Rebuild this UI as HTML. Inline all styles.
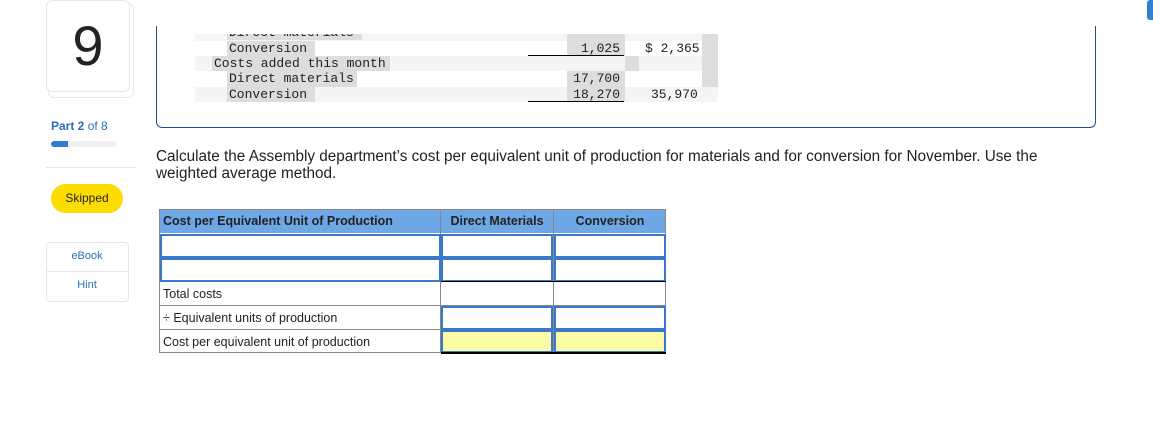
<!DOCTYPE html>
<html><head><style>
body{margin:0;width:1153px;height:428px;background:#fff;position:relative;overflow:hidden;font-family:"Liberation Sans",sans-serif}
.a{position:absolute}
.mono{font-family:"Liberation Mono",monospace;font-size:13px;line-height:15px;color:#222}
.hl{background:#ddd}
</style></head><body>
<div class="a" style="left:48px;top:3px;width:84px;height:93px;border:1px solid #e6e6e6;border-radius:6px"></div>
<div class="a" style="left:46px;top:0px;width:82px;height:90px;border:1px solid #e6e6e6;border-radius:6px;background:#fff;text-align:center;font-size:56px;line-height:90px;color:#222">9</div>
<div class="a" style="left:51px;top:119px;font-size:12px;color:#2f6db5"><b>Part 2</b> of 8</div>
<div class="a" style="left:51px;top:141px;width:66px;height:6px;background:#f0f0f0;border-radius:3px"></div>
<div class="a" style="left:51px;top:141px;width:17px;height:6px;background:#2f80d1;border-radius:3px 0 0 3px"></div>
<div class="a" style="left:46px;top:167px;width:90px;height:1px;background:#e6e6e6"></div>
<div class="a" style="left:51px;top:184px;width:72px;height:29px;background:#fddc00;border-radius:15px;font-size:12px;line-height:29px;text-align:center;color:#222">Skipped</div>
<div class="a" style="left:46px;top:242px;width:81px;height:58px;border:1px solid #e6e6e6;border-radius:4px"></div>
<div class="a" style="left:46px;top:271px;width:82px;height:1px;background:#e6e6e6"></div>
<div class="a" style="left:46px;top:250px;width:82px;text-align:center;font-size:11px;color:#2f6db5">eBook</div>
<div class="a" style="left:46px;top:279px;width:82px;text-align:center;font-size:11px;color:#2f6db5">Hint</div>
<div class="a" style="left:1147px;top:0;width:6px;height:20px;background:#2f80d1;border-radius:3px 0 0 3px"></div>

<div class="a" style="left:156px;top:26px;width:938px;height:101px;border:1px solid #1f4e8c;border-top:none;border-radius:0 0 6px 6px"></div>
<div class="a" style="left:195px;top:34px;width:523px;height:7px;background:#f5f5f5"></div>
<div class="a" style="left:195px;top:56px;width:523px;height:15px;background:#f5f5f5"></div>
<div class="a" style="left:195px;top:87px;width:523px;height:15px;background:#f5f5f5"></div>
<div class="a hl" style="left:227px;top:34px;width:135px;height:6px"></div>
<div class="a" style="left:195px;top:34px;width:523px;height:6px;overflow:hidden"><div class="mono" style="position:absolute;left:34px;top:-9px">Direct materials</div><div class="mono" style="position:absolute;left:375px;top:-9px;width:50px;text-align:right">$ 1,340</div></div>
<div class="a hl" style="left:227px;top:41px;width:88px;height:15px"></div>
<div class="a mono" style="left:229px;top:41px">Conversion</div>
<div class="a hl" style="left:212px;top:56px;width:178px;height:15px"></div>
<div class="a mono" style="left:214px;top:56px">Costs added this month</div>
<div class="a hl" style="left:227px;top:71px;width:130px;height:16px"></div>
<div class="a mono" style="left:229px;top:71px">Direct materials</div>
<div class="a hl" style="left:227px;top:87px;width:88px;height:15px"></div>
<div class="a mono" style="left:229px;top:87px">Conversion</div>
<div class="a hl" style="left:567px;top:34px;width:58px;height:22px"></div>
<div class="a hl" style="left:567px;top:71px;width:58px;height:31px"></div>
<div class="a hl" style="left:625px;top:56px;width:14px;height:15px"></div>
<div class="a hl" style="left:702px;top:34px;width:16px;height:53px"></div>
<div class="a mono" style="left:560px;top:41px;width:60px;text-align:right">1,025</div>
<div class="a mono" style="left:560px;top:71px;width:60px;text-align:right">17,700</div>
<div class="a mono" style="left:560px;top:87px;width:60px;text-align:right">18,270</div>
<div class="a mono" style="left:645px;top:41px">$ 2,365</div>
<div class="a mono" style="left:651px;top:87px">35,970</div>
<div class="a" style="left:528px;top:55px;width:96px;height:1px;background:#000"></div>
<div class="a" style="left:528px;top:101px;width:96px;height:1px;background:#000"></div>

<div class="a" style="left:156px;top:148px;width:915px;font-size:15.3px;line-height:17px;color:#222">Calculate the Assembly department’s cost per equivalent unit of production for materials and for conversion for November. Use the weighted average method.</div>

<div class="a" style="left:159px;top:209px;width:507px;height:144px;border:1px solid #888;box-sizing:border-box"></div>
<div class="a" style="left:160px;top:210px;width:505px;height:23px;background:#6ea7e6"></div>
<div class="a" style="left:163px;top:214px;font-size:12.5px;font-weight:bold;color:#222">Cost per Equivalent Unit of Production</div>
<div class="a" style="left:441px;top:214px;width:112px;text-align:center;font-size:12.5px;font-weight:bold;color:#222">Direct Materials</div>
<div class="a" style="left:554px;top:214px;width:112px;text-align:center;font-size:12.5px;font-weight:bold;color:#222">Conversion</div>
<div class="a" style="left:440px;top:209px;width:1px;height:144px;background:#888"></div>
<div class="a" style="left:553px;top:209px;width:1px;height:144px;background:#888"></div>
<div class="a" style="left:159px;top:305px;width:282px;height:1px;background:#888"></div>
<div class="a" style="left:159px;top:329px;width:282px;height:1px;background:#888"></div>
<div class="a" style="left:441px;top:305px;width:225px;height:1px;background:#888"></div>
<div class="a" style="left:163px;top:287px;font-size:12.5px;color:#222">Total costs</div>
<div class="a" style="left:163px;top:311px;font-size:12.5px;color:#222">÷ Equivalent units of production</div>
<div class="a" style="left:163px;top:335px;font-size:12.5px;color:#222">Cost per equivalent unit of production</div>
<div class="a" style="left:160px;top:234px;width:277px;height:20px;border:2px solid #3a78c9"></div>
<div class="a" style="left:160px;top:258px;width:277px;height:20px;border:2px solid #3a78c9"></div>
<div class="a" style="left:441px;top:234px;width:108px;height:20px;border:2px solid #3a78c9"></div>
<div class="a" style="left:441px;top:258px;width:108px;height:20px;border:2px solid #3a78c9"></div>
<div class="a" style="left:554px;top:234px;width:108px;height:20px;border:2px solid #3a78c9"></div>
<div class="a" style="left:554px;top:258px;width:108px;height:20px;border:2px solid #3a78c9"></div>
<div class="a" style="left:441px;top:306px;width:108px;height:20px;border:2px solid #3a78c9"></div>
<div class="a" style="left:554px;top:306px;width:108px;height:20px;border:2px solid #3a78c9"></div>
<div class="a" style="left:441px;top:330px;width:108px;height:19px;border:2px solid #3a78c9;background:#fbfca5"></div>
<div class="a" style="left:554px;top:330px;width:108px;height:19px;border:2px solid #3a78c9;background:#fbfca5"></div>
<div class="a" style="left:441px;top:281px;width:225px;height:1px;background:#000"></div>
<div class="a" style="left:441px;top:352px;width:225px;height:2px;background:#000"></div>
</body></html>
